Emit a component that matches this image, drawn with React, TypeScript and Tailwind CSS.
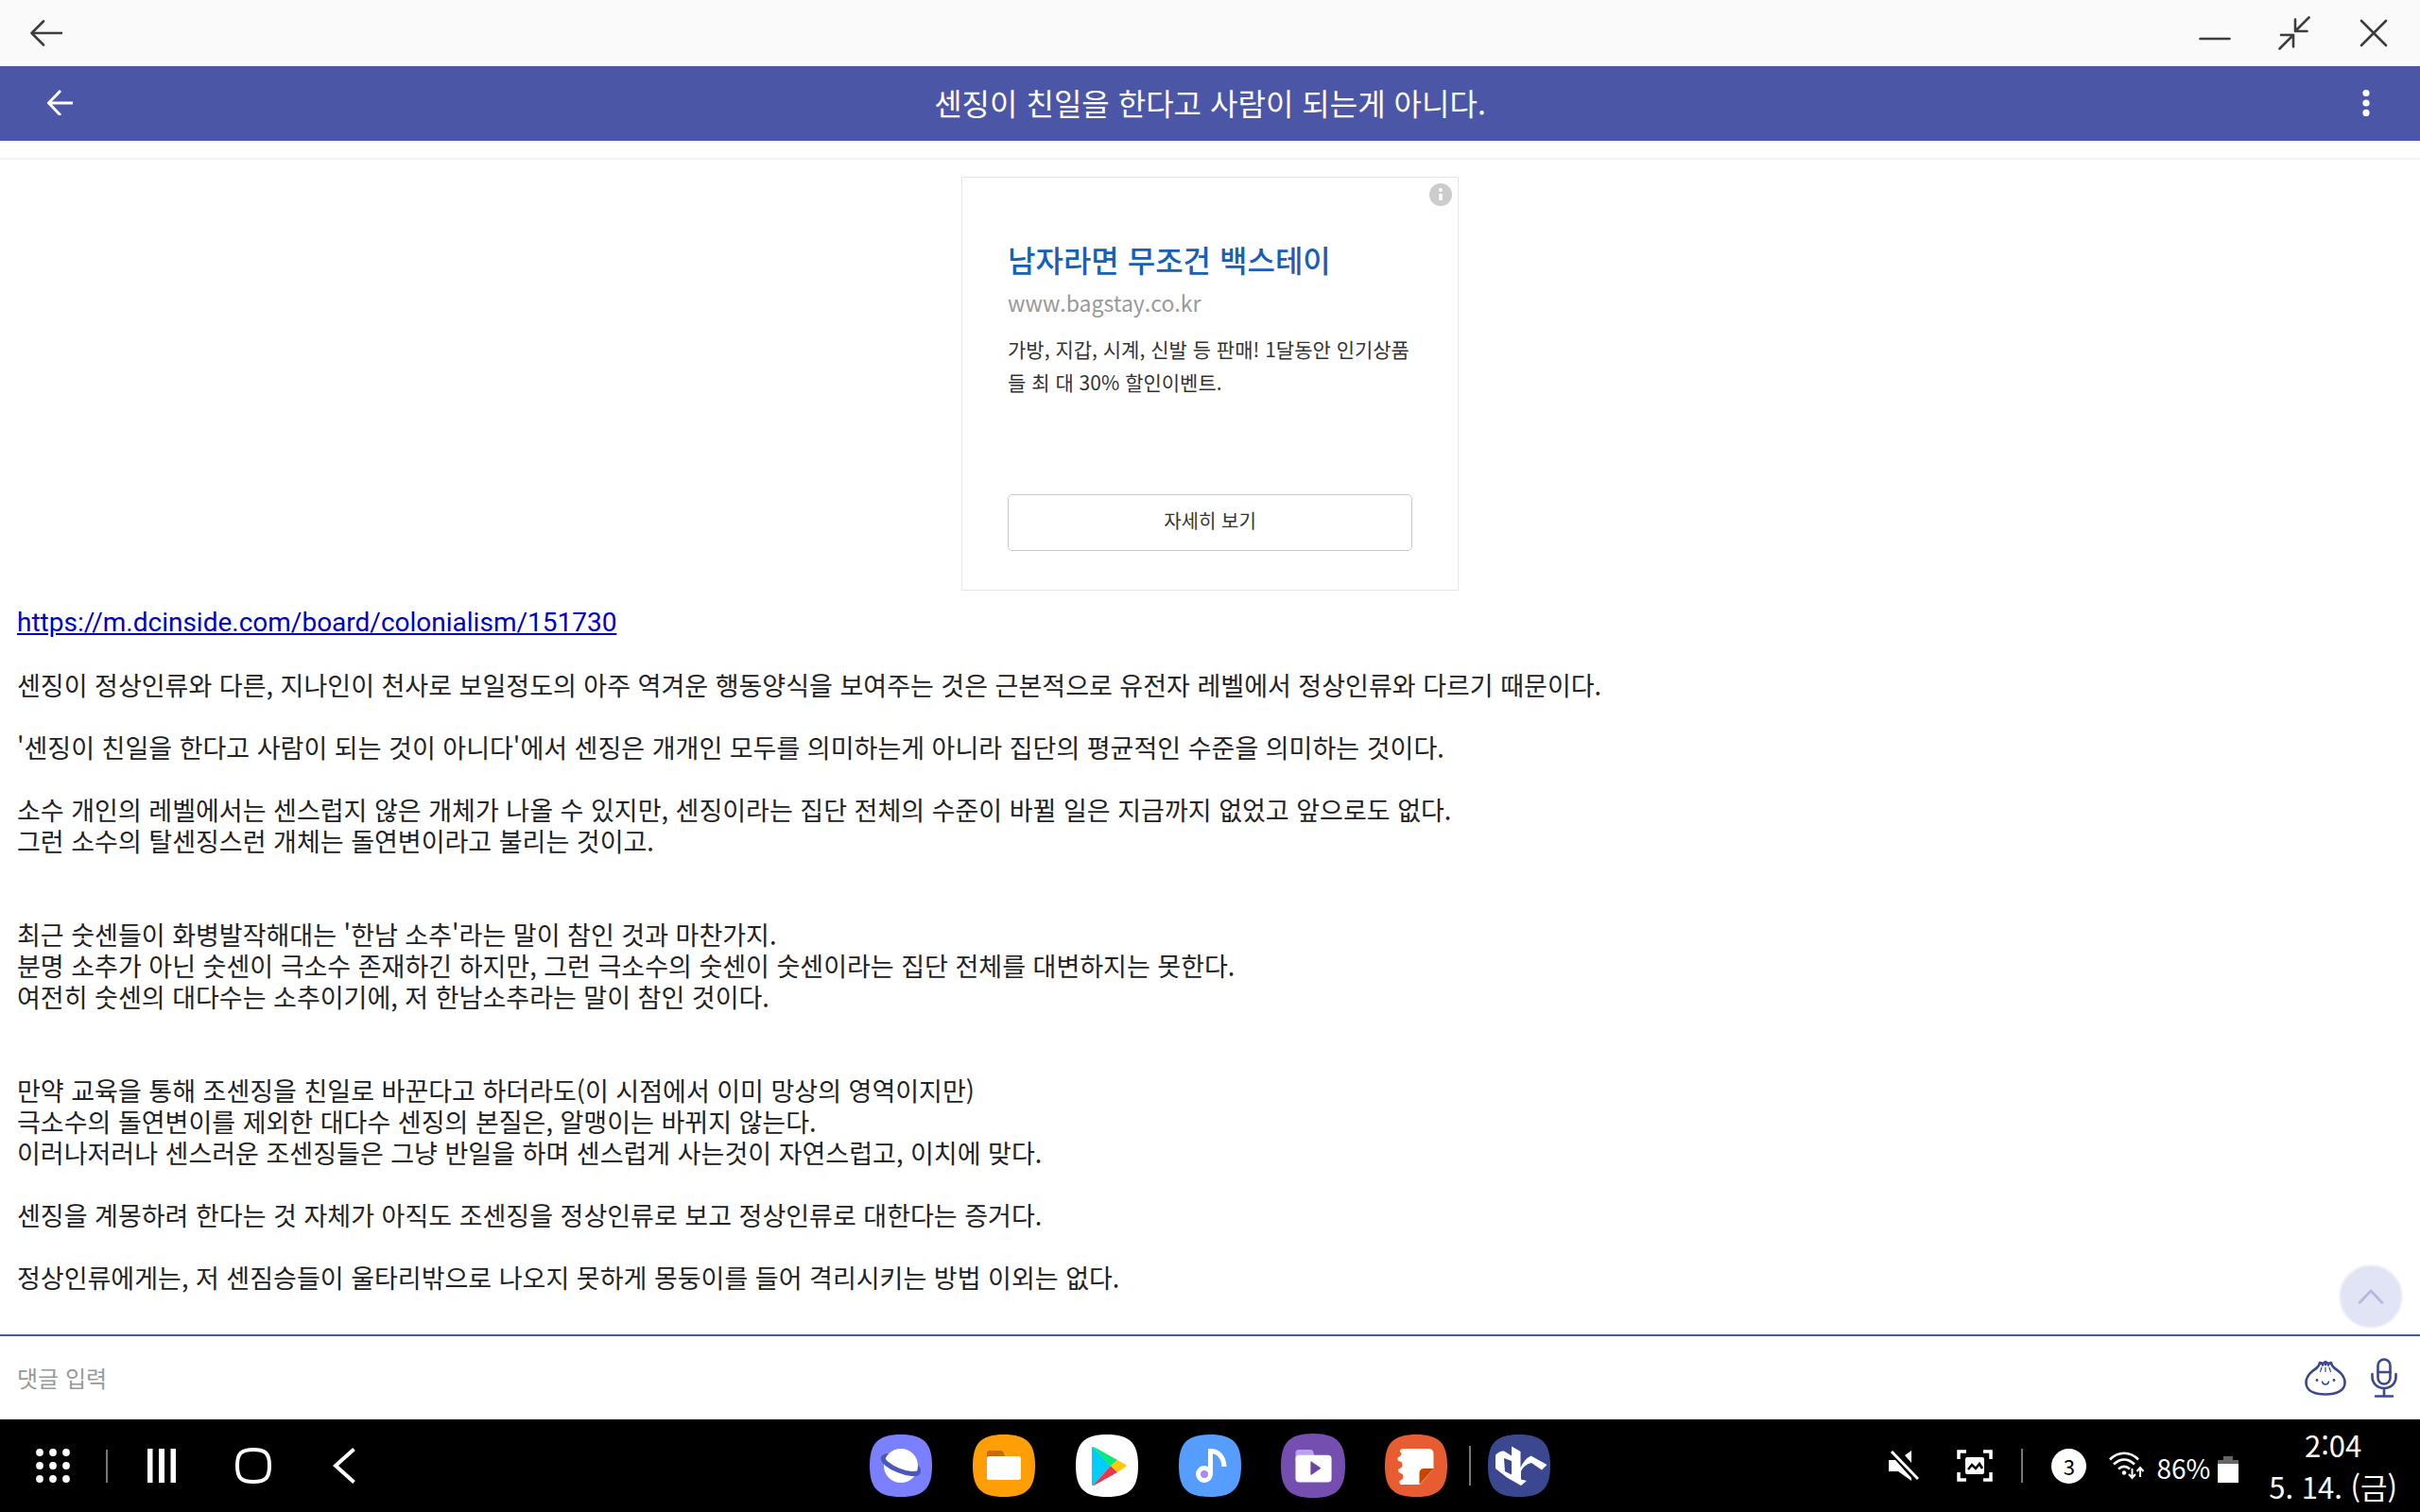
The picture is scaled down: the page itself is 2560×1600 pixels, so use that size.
import type { ReactNode } from "react";

const SQUIRCLE = "M33 0C9 0 0 9 0 33s9 33 33 33 33-9 33-33S57 0 33 0Z";

const paragraphs = [
  ["센징이 정상인류와 다른, 지나인이 천사로 보일정도의 아주 역겨운 행동양식을 보여주는 것은 근본적으로 유전자 레벨에서 정상인류와 다르기 때문이다."],
  ["'센징이 친일을 한다고 사람이 되는 것이 아니다'에서 센징은 개개인 모두를 의미하는게 아니라 집단의 평균적인 수준을 의미하는 것이다."],
  [
    "소수 개인의 레벨에서는 센스럽지 않은 개체가 나올 수 있지만, 센징이라는 집단 전체의 수준이 바뀔 일은 지금까지 없었고 앞으로도 없다.",
    "그런 소수의 탈센징스런 개체는 돌연변이라고 불리는 것이고.",
    "",
  ],
  [
    "최근 숫센들이 화병발작해대는 '한남 소추'라는 말이 참인 것과 마찬가지.",
    "분명 소추가 아닌 숫센이 극소수 존재하긴 하지만, 그런 극소수의 숫센이 숫센이라는 집단 전체를 대변하지는 못한다.",
    "여전히 숫센의 대다수는 소추이기에, 저 한남소추라는 말이 참인 것이다.",
    "",
  ],
  [
    "만약 교육을 통해 조센징을 친일로 바꾼다고 하더라도(이 시점에서 이미 망상의 영역이지만)",
    "극소수의 돌연변이를 제외한 대다수 센징의 본질은, 알맹이는 바뀌지 않는다.",
    "이러나저러나 센스러운 조센징들은 그냥 반일을 하며 센스럽게 사는것이 자연스럽고, 이치에 맞다.",
  ],
  ["센징을 계몽하려 한다는 것 자체가 아직도 조센징을 정상인류로 보고 정상인류로 대한다는 증거다."],
  ["정상인류에게는, 저 센짐승들이 울타리밖으로 나오지 못하게 몽둥이를 들어 격리시키는 방법 이외는 없다."],
];

function WindowBar() {
  return (
    <div className="flex h-[70px] items-center justify-between bg-[#fafafa] px-8 text-[#3d3d3d]">
      <button type="button" aria-label="이전">
        <svg className="h-7 w-[34px]" viewBox="0 0 34 28" fill="none" stroke="currentColor" strokeWidth="2.6" strokeLinecap="round" strokeLinejoin="round">
          <path d="M14 1.5 1.5 14 14 26.5M1.5 14H33" />
        </svg>
      </button>
      <div className="flex items-center gap-[50px]">
        <button type="button" aria-label="최소화">
          <svg className="h-9 w-[34px]" viewBox="0 0 34 36" fill="none" stroke="currentColor" strokeWidth="2.6" strokeLinecap="round">
            <path d="M1.5 24h31" />
          </svg>
        </button>
        <button type="button" aria-label="창 축소">
          <svg className="h-9 w-[34px]" viewBox="0 0 34 36" fill="none" stroke="currentColor" strokeWidth="2.6" strokeLinecap="round" strokeLinejoin="round">
            <path d="M32.5 1.5 18 16M18 3.500V16h12.500M1.500 34.500 16 20M3 20h13v12.500" />
          </svg>
        </button>
        <button type="button" aria-label="닫기">
          <svg className="h-[34px] w-[34px]" viewBox="0 0 34 34" fill="none" stroke="currentColor" strokeWidth="2.6" strokeLinecap="round">
            <path d="m4 4 26 26M30 4 4 30" />
          </svg>
        </button>
      </div>
    </div>
  );
}

function TitleBar() {
  return (
    <header className="grid h-[79px] grid-cols-[1fr_auto_1fr] items-center bg-[#4b57a6] px-[50px] pb-1 text-white">
      <button type="button" aria-label="뒤로" className="justify-self-start">
        <svg className="h-7 w-7" viewBox="0 0 28 28" fill="none" stroke="currentColor" strokeWidth="3" strokeLinejoin="round">
          <path d="M14 2 1.500 15 14 28M1.500 15H27" />
        </svg>
      </button>
      <h1 className="text-[32px] leading-10">센징이 친일을 한다고 사람이 되는게 아니다.</h1>
      <button type="button" aria-label="메뉴" className="justify-self-end">
        <svg className="h-[30px] w-[14px]" viewBox="0 0 14 30" fill="currentColor">
          <circle cx="7" cy="5.500" r="3.600" />
          <circle cx="7" cy="16" r="3.600" />
          <circle cx="7" cy="26.400" r="3.600" />
        </svg>
      </button>
    </header>
  );
}

function AdCard() {
  return (
    <aside className="relative mx-auto mt-[18px] flex h-[438px] w-[526px] flex-col border border-[#e5e5e5] px-12 pt-16 pb-[41px]">
      <button type="button" aria-label="광고 정보" className="absolute top-[6px] right-[6px]">
        <svg className="h-6 w-6" viewBox="0 0 24 24">
          <circle cx="12" cy="12" r="12" fill="#ccc" />
          <circle cx="12" cy="7" r="2" fill="#fff" />
          <path d="M10.200 11h3.600v7h-3.600z" fill="#fff" />
        </svg>
      </button>
      <h2 className="text-[32px] leading-[44px] font-medium text-[#1760b8]">남자라면 무조건 백스테이</h2>
      <p className="mt-2 text-[23px] leading-8 text-[#999]">www.bagstay.co.kr</p>
      <p className="mt-4 text-[21px] leading-[35px] whitespace-nowrap text-[#333]">
        가방, 지갑, 시계, 신발 등 판매! 1달동안 인기상품
        <br />들 최 대 30% 할인이벤트.
      </p>
      <button type="button" className="mt-auto h-[60px] rounded-[5px] border border-[#c8c8c8] pb-1 text-[20px] text-[#333]">
        자세히 보기
      </button>
    </aside>
  );
}

function Post() {
  return (
    <article className="mt-[17px] space-y-[33px] px-[18px] text-[27px] leading-[33px] text-[#222]">
      <p className="font-[Roboto,sans-serif] text-[28px]">
        <a href="https://m.dcinside.com/board/colonialism/151730" className="text-[#0000c8] underline">
          https://m.dcinside.com/board/colonialism/151730
        </a>
      </p>
      {paragraphs.map((lines, i) => (
        <p key={i}>
          {lines.map((line, j) => (
            <span key={j} className="block min-h-[33px]">{line}</span>
          ))}
        </p>
      ))}
    </article>
  );
}

function CommentBar() {
  return (
    <form className="flex h-[90px] items-center gap-[26px] border-t-2 border-[#4b57a6] bg-white pr-6 pl-[18px] text-[#3b4890]">
      <input aria-label="댓글 입력" placeholder="댓글 입력" className="min-w-0 flex-1 text-2xl text-[#222] outline-none placeholder:text-[#999]" />
      <button type="button" aria-label="디시콘">
        <svg className="h-[38px] w-11" viewBox="0 0 44 38" fill="none" stroke="currentColor" strokeWidth="2.600" strokeLinecap="round" strokeLinejoin="round">
          <path d="M16 3c-.500 5-5 6.500-8.500 9.500C3.500 16 1.500 19.500 1.500 24c0 8.500 8.500 12.500 20.500 12.500S42.500 32.500 42.500 24c0-4.500-2-8-6-11.500C33 9.500 28.500 8 28 3l-3 1-3-2-3 2Z" />
          <path d="M19 4v1.500M25 4v1.500M22 2.500V5" />
          <path d="m18 8-1.500 4.500M22 8v4.500M26 8l1.500 4.500" strokeWidth="1.200" />
          <path d="M18.500 23c1 4 6 4 7 0" strokeWidth="1.500" />
          <circle cx="13" cy="21.500" r="1.400" fill="currentColor" stroke="none" />
          <circle cx="31" cy="21.500" r="1.400" fill="currentColor" stroke="none" />
        </svg>
      </button>
      <button type="button" aria-label="음성 입력">
        <svg className="h-[42px] w-7" viewBox="0 0 28 42" fill="none" stroke="currentColor" strokeWidth="2.600" strokeLinecap="round">
          <rect x="7.500" y="1.500" width="13" height="26" rx="6.500" />
          <path d="M7.500 15h13M1.500 17v3c0 7 5.500 12 12.500 12s12.500-5 12.500-12v-3M14 32v8M5 40.500h18" />
        </svg>
      </button>
    </form>
  );
}

function AppIcon({ label, bg, large, children }: { label: string; bg: string; large?: boolean; children: ReactNode }) {
  return (
    <button type="button" aria-label={label}>
      <svg className={large ? "-mx-px h-[68px] w-[68px]" : "h-[66px] w-[66px]"} viewBox="0 0 66 66">
        <path d={SQUIRCLE} fill={bg} />
        {children}
      </svg>
    </button>
  );
}

function Dock() {
  return (
    <nav className="flex items-center gap-[43px]">
      <AppIcon label="인터넷" bg="#7a80ff">
        <ellipse cx="33" cy="32" rx="20" ry="6.500" transform="rotate(22 33 32)" fill="none" stroke="#4a58bd" strokeWidth="5" />
        <circle cx="33" cy="33" r="18" fill="#fff" />
        <path d="M13 32a20 6.500 0 0 0 40 0" transform="rotate(22 33 32)" fill="none" stroke="#4a58bd" strokeWidth="5" />
      </AppIcon>
      <AppIcon label="내 파일" bg="#ff9f05">
        <path d="M15 30V20q0-3 3-3h12q2 0 3 3l2 6z" fill="#c9690d" />
        <rect x="15" y="23" width="36" height="25" rx="2.500" fill="#fff" />
      </AppIcon>
      <AppIcon label="Play 스토어" bg="#fff">
        <path d="M17 14v39q0 1 1 1l19-21L18 13q-1 0-1 1Z" fill="#00cdfa" />
        <path d="M18 13q1 0 2 .500l24 13.500-7 6.500Z" fill="#00ee77" />
        <path d="M18 54q1 0 2-.500L44 40l-7-7Z" fill="#ee334c" />
        <path d="m44 27 9 5q1.500 1 0 2l-9 6-7-7Z" fill="#ffc90a" />
      </AppIcon>
      <AppIcon label="음악" bg="#559dff">
        <circle cx="27" cy="42" r="6.500" fill="#a98bf7" stroke="#fff" strokeWidth="5" />
        <path d="M33.500 42V17.500C42 17.500 47.500 24 48 34" fill="none" stroke="#fff" strokeWidth="5" />
      </AppIcon>
      <AppIcon label="비디오" bg="#744fb0" large>
        <path d="M15 28v-8q0-3.500 3.500-3.500H30q3 0 3.500 3l1 4.500z" fill="#bba2f0" />
        <rect x="15" y="22" width="37" height="28" rx="4" fill="#fff" />
        <path d="m31 29 9.500 6.500L31 42Z" fill="#6b44a8" stroke="#6b44a8" strokeLinejoin="round" />
      </AppIcon>
      <AppIcon label="노트" bg="#e85c31">
        <path d="M20 15h26q5.500 0 5.500 5.500V36L37 53H17q-2-1-1.500-4 4-1.500 4-4.500t-4-4q-2-1.500-1-4 4-1 4-4.500t-4-4q-2-1.500-.500-4 3.500-1 3.500-4-2-2-2-3 2-2 4-2Z" fill="#fff" />
        <path d="M36.500 53V41q0-5 5-5h10L36.500 53Z" fill="#c64500" />
      </AppIcon>
      <div className="-mr-[25px] -ml-5 h-[42px] w-0.5 bg-[#777]" />
      <AppIcon label="디시인사이드" bg="#3b488f">
        <path
          d="M8 22q4-5 9-4.500l8 5V12.500L34.500 18v17q4-9 11-12.500L62.500 32l-5.500 5.500L46 30q-8 2-11 9v8.500l6 1.500-6 5-15-8.500-3-2.500L8 36ZM17 25l1 14 7 3.500V28Z"
          fill="#fff"
          fillRule="evenodd"
        />
      </AppIcon>
    </nav>
  );
}

function StatusArea() {
  return (
    <div className="flex items-center justify-end pr-6">
      <svg className="h-8 w-8" viewBox="0 0 32 32" fill="#fff" role="img" aria-label="음소거">
        <path d="M0 10h7l17 19v3L10 22H0ZM24 0v13l-7-8Z" />
        <path d="m3 1 28 29" stroke="#fff" strokeWidth="3" />
      </svg>
      <svg className="ml-10 h-[34px] w-[38px]" viewBox="0 0 38 34" fill="none" stroke="#fff" strokeWidth="3.500" role="img" aria-label="화면 캡처">
        <path d="M2 10V2h8M28 2h8v8M36 24v8h-8M10 32H2v-8" />
        <rect x="9" y="8" width="20" height="18" rx="2" fill="#fff" stroke="none" />
        <path d="m12 21 4-5 4 4 4-5 3 5" stroke="#000" strokeWidth="2.500" />
      </svg>
      <div className="ml-[30px] h-9 w-0.5 bg-[#777]" />
      <span className="ml-[30px] flex size-[37px] items-center justify-center rounded-full bg-white text-[22px] leading-none text-black">3</span>
      <svg className="ml-6 h-[30px] w-[38px]" viewBox="0 0 38 30" fill="none" stroke="#fff" strokeWidth="2.600" role="img" aria-label="와이파이">
        <path d="M1 8.500C10-.500 22-.500 31 8.500M5 13.500c7-6.500 15-6.500 22 0M10 18.500c4-3.500 8-3.500 12 0" />
        <circle cx="16" cy="22.500" r="2.200" fill="#fff" stroke="none" />
        <path d="M24.500 18v9M21 24l3.500 4 3.500-4M33 27v-9M29.500 21l3.500-4 3.500 4" strokeWidth="2" />
      </svg>
      <span className="ml-3 pt-1 text-[28px] leading-9">86%</span>
      <svg className="mt-2 ml-2 h-[28px] w-[22px]" viewBox="0 0 22 28" role="img" aria-label="배터리">
        <path d="M6 0h10v4h6v5H0V4h6Z" fill="#666" />
        <path d="M0 8h22v20H0Z" fill="#fff" />
      </svg>
      <div className="ml-8 text-center text-[31px] leading-[44px]">
        <p>2:04</p>
        <p>5. 14. (금)</p>
      </div>
    </div>
  );
}

function TaskBar() {
  return (
    <footer className="grid h-[98px] grid-cols-[1fr_auto_1fr] items-center bg-black text-white">
      <div className="flex items-center pl-[38px]">
        <button type="button" aria-label="모든 앱">
          <svg className="h-9 w-9" viewBox="0 0 36 36" fill="currentColor">
            {[4, 18, 32].map((y) => [4, 18, 32].map((x) => <circle key={`${x}-${y}`} cx={x} cy={y} r="3.900" />))}
          </svg>
        </button>
        <div className="ml-[38px] h-[35px] w-0.5 bg-[#777]" />
        <button type="button" aria-label="최근 앱" className="ml-[42px]">
          <svg className="h-9 w-[30px]" viewBox="0 0 30 36" fill="currentColor">
            <path d="M0 0h5.500v36H0ZM12 0h6v36h-6ZM24.500 0H30v36h-5.500Z" />
          </svg>
        </button>
        <button type="button" aria-label="홈" className="ml-[62px]">
          <svg className="h-10 w-10" viewBox="0 0 40 40" fill="none" stroke="currentColor" strokeWidth="4">
            <path d="M20 3C7 3 3 7 3 20s4 17 17 17 17-4 17-17S33 3 20 3Z" />
          </svg>
        </button>
        <button type="button" aria-label="뒤로 가기" className="ml-16">
          <svg className="h-10 w-6" viewBox="0 0 24 40" fill="none" stroke="currentColor" strokeWidth="4">
            <path d="M22.500 2.500 3 20l19.500 17.500" />
          </svg>
        </button>
      </div>
      <Dock />
      <StatusArea />
    </footer>
  );
}

export default function App() {
  return (
    <div lang="ko" className="flex min-h-screen flex-col bg-white font-['Noto_Sans_CJK_KR',sans-serif]">
      <WindowBar />
      <TitleBar />
      <main className="relative flex-1">
        <hr className="mt-[18px] border-t-2 border-[#f3f3f3]" />
        <AdCard />
        <Post />
        <button type="button" aria-label="맨 위로" className="absolute right-[18px] bottom-[6px] flex size-[68px] items-center justify-center rounded-full border-2 border-[#f3f3f3] bg-[#e0e4f5]">
          <svg className="h-4 w-7" viewBox="0 0 28 16" fill="none" stroke="#b4b8dc" strokeWidth="2.600" strokeLinecap="round" strokeLinejoin="round">
            <path d="M2 14.500 14 2l12 12.500" />
          </svg>
        </button>
      </main>
      <CommentBar />
      <TaskBar />
    </div>
  );
}
